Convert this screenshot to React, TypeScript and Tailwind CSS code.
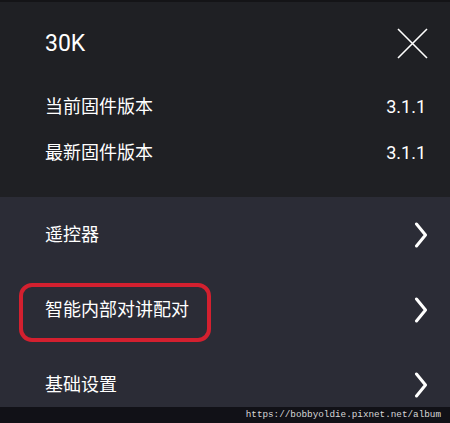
import React from "react";

const Chevron = () => (
  <svg width="14" height="26" viewBox="0 0 14 26" fill="none">
    <path d="M2.5 2 L11.5 13 L2.5 24" stroke="white" strokeWidth="3" strokeLinecap="round" strokeLinejoin="round" />
  </svg>
);

const Row = ({ label, boxed }: { label: string; boxed?: boolean }) => (
  <div className="relative flex h-[75px] items-center justify-between pl-[45px] pr-[22px]">
    {boxed && (
      <div className="absolute left-[19px] top-[11px] h-[59px] w-[192px] rounded-[13px] border-[4px] border-[#d3202f]" />
    )}
    <span className="text-[18px] leading-none text-white">{label}</span>
    <Chevron />
  </div>
);

export default function App() {
  return (
    <div
      className="relative h-[423px] w-[450px] overflow-hidden bg-[#2b2c36]"
      style={{ fontFamily: 'Roboto, "Noto Sans CJK SC", sans-serif' }}
    >
      <div className="h-[2px] bg-[#141417]" />
      <div className="h-[195px] bg-[#1f2024]">
        <div className="flex h-[82px] items-center justify-between pl-[45px] pr-[22px]">
          <span className="text-[23px] leading-none text-white">30K</span>
          <svg width="31" height="31" viewBox="0 0 31 31" fill="none">
            <path d="M1 1 L30 30 M30 1 L1 30" stroke="white" strokeWidth="1.6" />
          </svg>
        </div>
        <div className="flex h-[46px] items-center justify-between pl-[45px] pr-[24px]">
          <span className="text-[18px] leading-none text-white">当前固件版本</span>
          <span className="text-[18px] leading-none text-white">3.1.1</span>
        </div>
        <div className="flex h-[46px] items-center justify-between pl-[45px] pr-[24px]">
          <span className="text-[18px] leading-none text-white">最新固件版本</span>
          <span className="text-[18px] leading-none text-white">3.1.1</span>
        </div>
      </div>
      <div>
        <Row label="遥控器" />
        <Row label="智能内部对讲配对" boxed />
        <Row label="基础设置" />
      </div>
      <div className="absolute bottom-0 left-0 right-0 flex h-[16px] items-center justify-end bg-[#111117] pr-[9px]">
        <span
          className="text-[9.3px] leading-none text-[#d8d8d8]"
          style={{ fontFamily: '"Liberation Mono", monospace' }}
        >
          https://bobbyoldie.pixnet.net/album
        </span>
      </div>
    </div>
  );
}
